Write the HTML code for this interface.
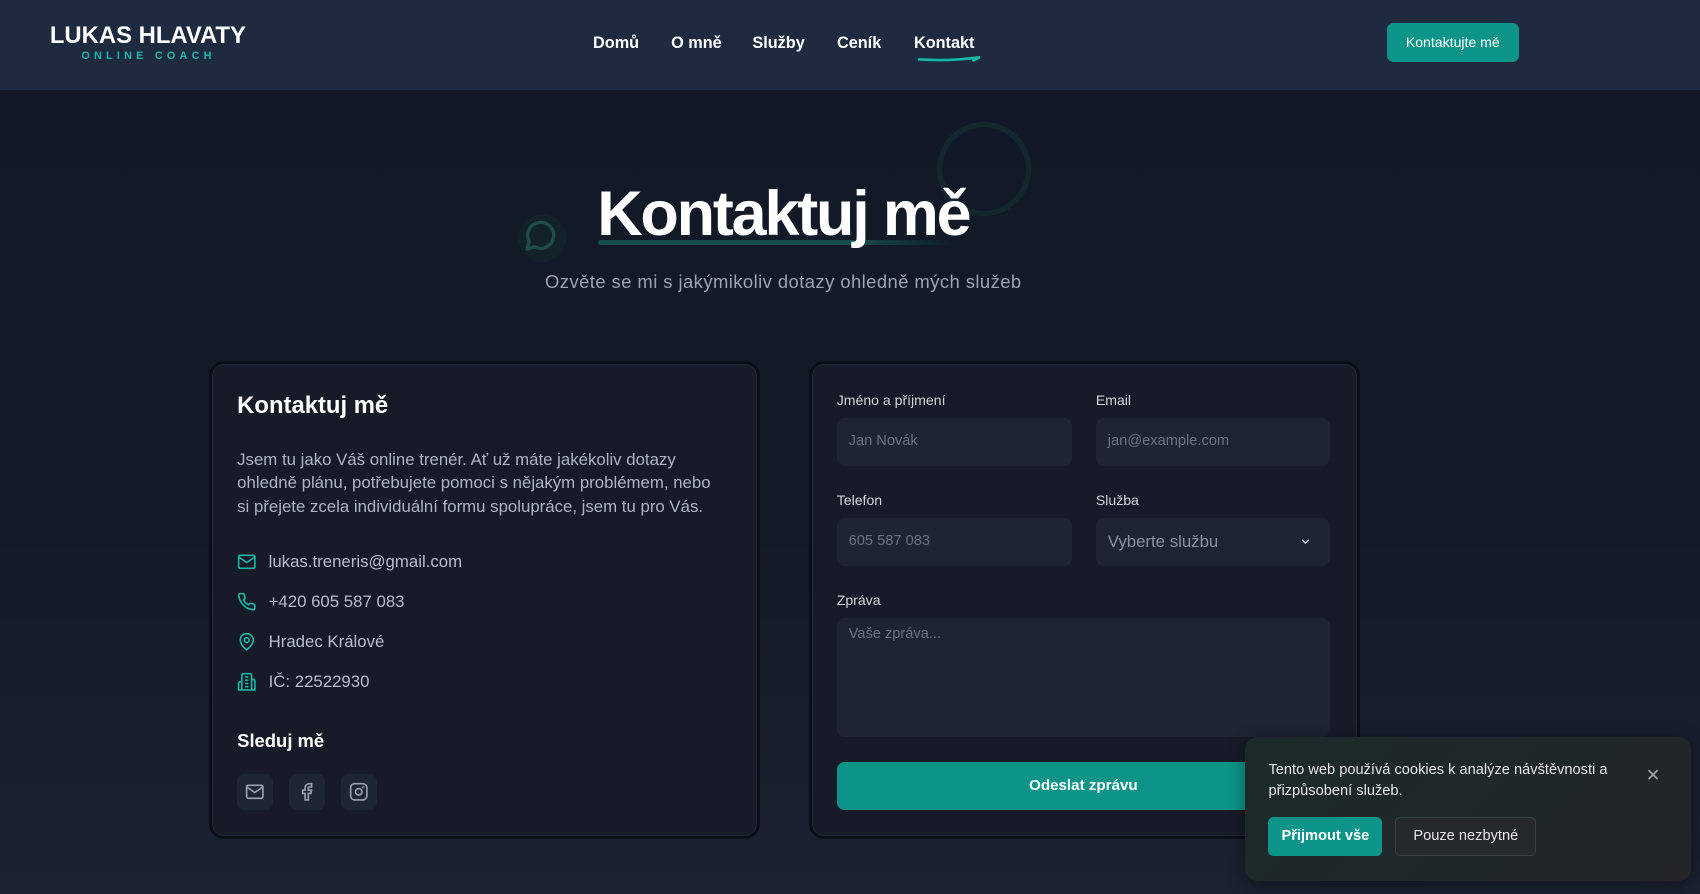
<!DOCTYPE html>
<html><head><meta charset="utf-8">
<style>
html{zoom:1.08418}
*{box-sizing:border-box;margin:0;padding:0}
body{width:1568px;height:825px;overflow:hidden;font-family:"Liberation Sans",sans-serif;background:linear-gradient(#111827 0%,#131a27 60%,#1b2231 100%);color:#fff;position:relative}
.hdr{position:absolute;left:0;top:0;width:1568px;height:83px;background:#1d2a3f}
.logo1{position:absolute;left:46px;top:20px;font-weight:700;font-size:22px;letter-spacing:0}
.logo2{position:absolute;left:75px;top:46px;font-size:10px;font-weight:700;color:#14b8a6;letter-spacing:3.9px}
.nav a{position:absolute;top:31px;font-size:15px;font-weight:700;color:#fff;text-decoration:none}
.btn{position:absolute;left:1279px;top:21px;width:122px;height:36px;background:#0d9488;border-radius:6px;font-size:13px;text-align:center;line-height:36px}
.title{position:absolute;left:0;width:1445px;text-align:center;top:164px;font-size:58px;font-weight:700;letter-spacing:-2px}
.tul{position:absolute;left:552px;top:221px;width:330px;height:5px;background:linear-gradient(90deg,#134e4a,#134e4a 70%,rgba(19,78,74,0));border-radius:3px}
.sub{position:absolute;left:0;width:1445px;text-align:center;top:250px;font-size:17px;color:#9ca3af;letter-spacing:0.4px}
.card{position:absolute;top:333px;width:508px;height:441px;background:#161b27;border:3px solid #0a0e16;border-radius:14px;box-shadow:inset 0 0 0 1px #232a37}
.h2{position:absolute;left:23px;top:26px;font-size:22px;font-weight:700}
.p{position:absolute;left:23px;top:77px;width:450px;font-size:15.5px;line-height:22px;color:#aeb4bf}
.it{position:absolute;left:23px;font-size:15.5px;color:#b8bec8}
.it svg{position:absolute;left:0;top:0}
.it span{position:absolute;left:29px;top:0;white-space:nowrap}
.soc{position:absolute;top:378px;width:33px;height:33px;background:#1f2633;border-radius:7px;display:flex;align-items:center;justify-content:center}
.lbl{position:absolute;font-size:13px;color:#d1d5db}
.inp{position:absolute;background:#1e2431;border-radius:7px;font-size:13.5px;color:#6b7280;padding-left:11px;line-height:44px}
.send{position:absolute;left:23px;top:367px;width:455px;height:44px;background:#0d9488;border-radius:7px;text-align:center;line-height:44px;font-size:14px;font-weight:700}
.ck{position:absolute;left:1148px;top:680px;width:412px;height:133px;border-radius:12px;background:linear-gradient(135deg,#1c2a2b,#232528);box-shadow:0 4px 16px rgba(0,0,0,.4)}
</style></head><body>
<div class="hdr">
<div class="logo1">LUKAS HLAVATY</div>
<div class="logo2">ONLINE COACH</div>
<div class="nav"><a style="left:547px">Domů</a><a style="left:619px">O mně</a><a style="left:694px">Služby</a><a style="left:772px">Ceník</a><a style="left:843px">Kontakt</a></div>
<svg style="position:absolute;left:846px;top:51px" width="62" height="8"><path d="M2 4 Q30 6 58 2 L52 5" stroke="#14b8a6" stroke-width="2.5" fill="none" stroke-linecap="round"/></svg>
<div class="btn">Kontaktujte mě</div>
</div>
<svg style="position:absolute;left:860px;top:108px" width="96" height="96"><circle cx="48" cy="48" r="41" stroke="#13282c" stroke-width="5" fill="none"/></svg>
<svg style="position:absolute;left:474px;top:194px" width="52" height="52"><circle cx="26" cy="26" r="22" fill="#14282c" opacity=".6"/><path d="M12 36 L14 29 A12 12 0 1 1 19 34 Z" stroke="#1d4e4a" stroke-width="3" fill="none" stroke-linejoin="round"/></svg>
<div class="tul"></div>
<div class="title">Kontaktuj mě</div>
<div class="sub">Ozvěte se mi s jakýmikoliv dotazy ohledně mých služeb</div>

<div class="card" style="left:193px">
<div class="h2">Kontaktuj mě</div>
<div class="p">Jsem tu jako Váš online trenér. Ať už máte jakékoliv dotazy ohledně plánu, potřebujete pomoci s nějakým problémem, nebo si přejete zcela individuální formu spolupráce, jsem tu pro Vás.</div>
<div class="it" style="top:173px"><svg width="18" height="18" viewBox="0 0 24 24" fill="none" stroke="#14b8a6" stroke-width="2"><rect x="2" y="4" width="20" height="16" rx="2"/><path d="M2 6l10 7 10-7"/></svg><span>lukas.treneris@gmail.com</span></div>
<div class="it" style="top:210px"><svg width="18" height="18" viewBox="0 0 24 24" fill="none" stroke="#14b8a6" stroke-width="2"><path d="M22 16.9v3a2 2 0 0 1-2.2 2 19.8 19.8 0 0 1-8.6-3.1 19.5 19.5 0 0 1-6-6A19.8 19.8 0 0 1 2.1 4.2 2 2 0 0 1 4.1 2h3a2 2 0 0 1 2 1.7c.1 1 .4 1.9.7 2.8a2 2 0 0 1-.5 2.1L8 9.8a16 16 0 0 0 6 6l1.3-1.3a2 2 0 0 1 2.1-.4c.9.3 1.8.6 2.8.7a2 2 0 0 1 1.7 2z"/></svg><span>+420 605 587 083</span></div>
<div class="it" style="top:247px"><svg width="18" height="18" viewBox="0 0 24 24" fill="none" stroke="#14b8a6" stroke-width="2"><path d="M20 10c0 6-8 12-8 12s-8-6-8-12a8 8 0 0 1 16 0z"/><circle cx="12" cy="10" r="3"/></svg><span>Hradec Králové</span></div>
<div class="it" style="top:284px"><svg width="18" height="18" viewBox="0 0 24 24" fill="none" stroke="#14b8a6" stroke-width="2"><path d="M6 22V4a2 2 0 0 1 2-2h8a2 2 0 0 1 2 2v18zM6 12H4a2 2 0 0 0-2 2v8h4M18 9h2a2 2 0 0 1 2 2v11h-4M10 6h4M10 10h4M10 14h4M10 18h4"/></svg><span>IČ: 22522930</span></div>
<div class="h2" style="top:338px;font-size:17px">Sleduj mě</div>
<div class="soc" style="left:23px"><svg width="18" height="18" viewBox="0 0 24 24" fill="none" stroke="#9ca3af" stroke-width="2"><rect x="2" y="4" width="20" height="16" rx="2"/><path d="M2 6l10 7 10-7"/></svg></div>
<div class="soc" style="left:71px"><svg width="18" height="18" viewBox="0 0 24 24" fill="none" stroke="#9ca3af" stroke-width="2"><path d="M18 2h-3a5 5 0 0 0-5 5v3H7v4h3v8h4v-8h3l1-4h-4V7a1 1 0 0 1 1-1h3z"/></svg></div>
<div class="soc" style="left:119px"><svg width="18" height="18" viewBox="0 0 24 24" fill="none" stroke="#9ca3af" stroke-width="2"><rect x="2" y="2" width="20" height="20" rx="5"/><circle cx="12" cy="12" r="4"/><circle cx="17.5" cy="6.5" r=".5"/></svg></div>
</div>

<div class="card" style="left:746px">
<div class="lbl" style="left:23px;top:26px">Jméno a příjmení</div>
<div class="lbl" style="left:262px;top:26px">Email</div>
<div class="inp" style="left:23px;top:50px;width:217px;height:44px">Jan Novák</div>
<div class="inp" style="left:262px;top:50px;width:216px;height:44px">jan@example.com</div>
<div class="lbl" style="left:23px;top:118px">Telefon</div>
<div class="lbl" style="left:262px;top:118px">Služba</div>
<div class="inp" style="left:23px;top:142px;width:217px;height:44px">605 587 083</div>
<div class="inp" style="left:262px;top:142px;width:216px;height:44px;font-size:15.5px;color:#8b919c">Vyberte službu<svg style="position:absolute;right:17px;top:16px" width="12" height="12" viewBox="0 0 24 24" fill="none" stroke="#d1d5db" stroke-width="2.5"><path d="M6 9l6 6 6-6"/></svg></div>
<div class="lbl" style="left:23px;top:210px">Zpráva</div>
<div class="inp" style="left:23px;top:234px;width:455px;height:110px;line-height:30px">Vaše zpráva...</div>
<div class="send">Odeslat zprávu</div>
</div>

<div class="ck">
<div style="position:absolute;left:22px;top:21px;width:330px;font-size:13.5px;line-height:19px;color:#e5e7eb">Tento web používá cookies k analýze návštěvnosti a přizpůsobení služeb.</div>
<div style="position:absolute;left:370px;top:26px;font-size:16px;color:#9ca3af">✕</div>
<div style="position:absolute;left:22px;top:74px;width:105px;height:36px;background:#0d9488;border-radius:5px;font-size:13.5px;font-weight:700;text-align:center;line-height:36px">Přijmout vše</div>
<div style="position:absolute;left:139px;top:74px;width:130px;height:36px;background:#25282c;border:1px solid #3b4047;border-radius:5px;font-size:13.5px;text-align:center;line-height:34px;color:#e5e7eb">Pouze nezbytné</div>
</div>
</body></html>
